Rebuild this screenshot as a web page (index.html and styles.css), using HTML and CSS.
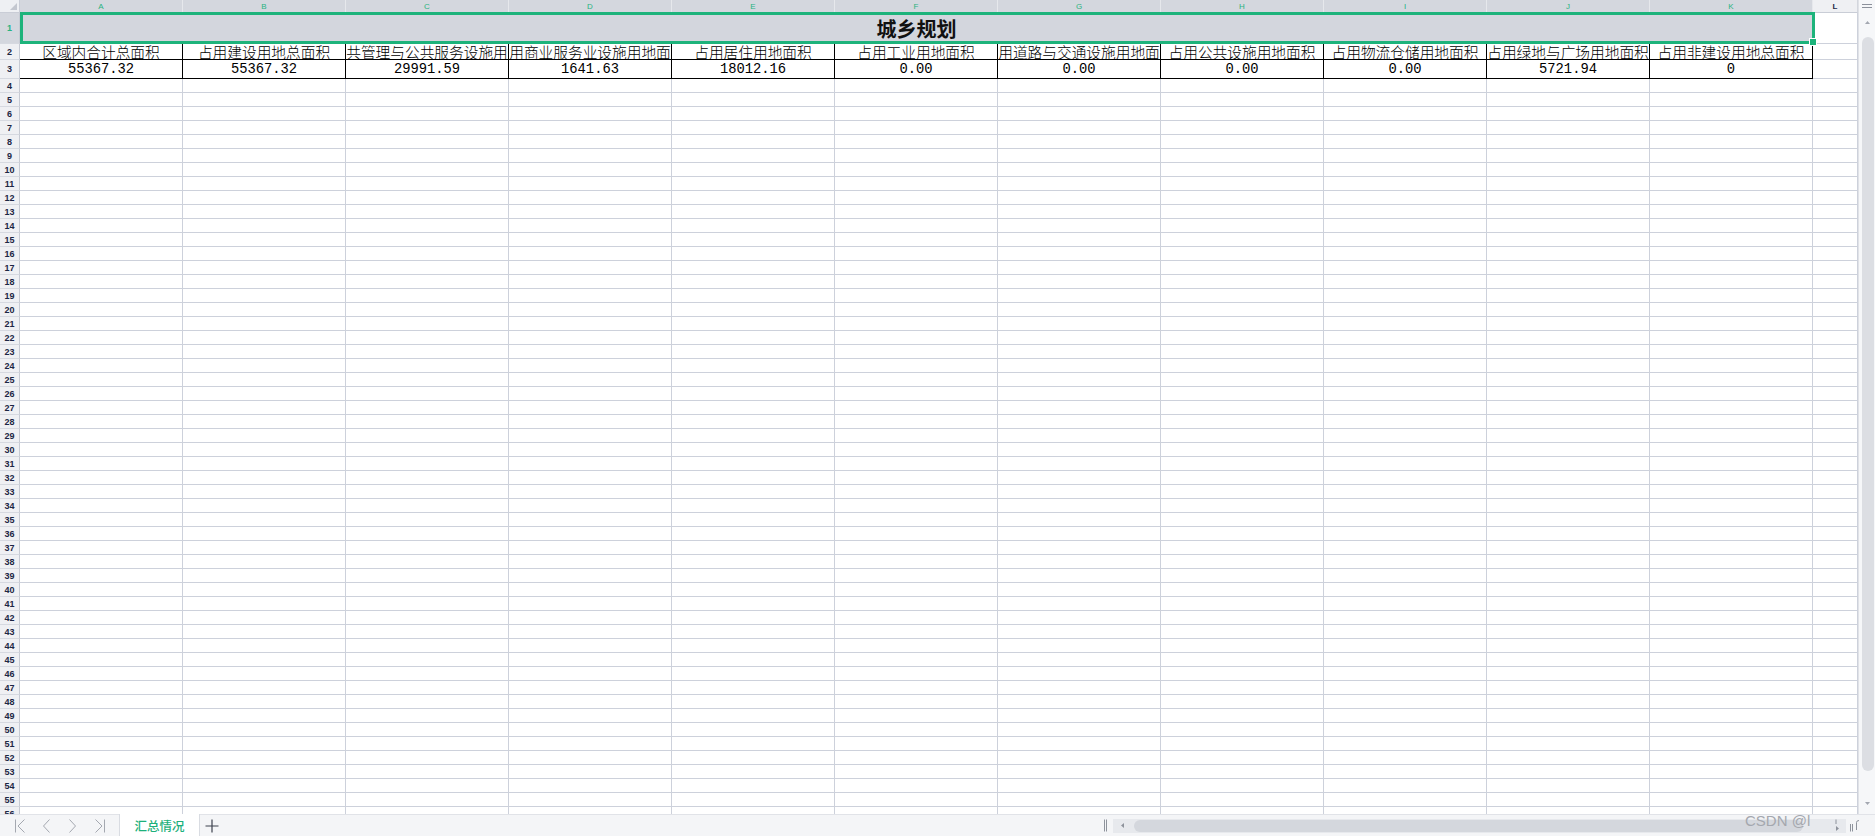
FILE: index.html
```html
<!DOCTYPE html>
<html lang="zh-CN">
<head>
<meta charset="utf-8">
<title>城乡规划</title>
<link rel="stylesheet" href="styles.css">
</head>
<body>
<div class="app">
  <div class="main">
    <div class="sheet" id="sheet">
      <div class="corner"><span class="tri"></span></div>
      <div class="colhd sel">A</div>
      <div class="colhd sel">B</div>
      <div class="colhd sel">C</div>
      <div class="colhd sel">D</div>
      <div class="colhd sel">E</div>
      <div class="colhd sel">F</div>
      <div class="colhd sel">G</div>
      <div class="colhd sel">H</div>
      <div class="colhd sel">I</div>
      <div class="colhd sel">J</div>
      <div class="colhd sel">K</div>
      <div class="colhd">L</div>

      <div class="rowhd sel">1</div>
      <div class="title">城乡规划</div>
      <div class="cell"></div>

      <div class="rowhd">2</div>
      <div class="cell hd"><span>区域内合计总面积</span></div>
      <div class="cell hd"><span>占用建设用地总面积</span></div>
      <div class="cell hd"><span>占用公共管理与公共服务设施用地面积</span></div>
      <div class="cell hd"><span>占用商业服务业设施用地面积</span></div>
      <div class="cell hd"><span>占用居住用地面积</span></div>
      <div class="cell hd"><span>占用工业用地面积</span></div>
      <div class="cell hd"><span>占用道路与交通设施用地面积</span></div>
      <div class="cell hd"><span>占用公共设施用地面积</span></div>
      <div class="cell hd"><span>占用物流仓储用地面积</span></div>
      <div class="cell hd"><span>占用绿地与广场用地面积</span></div>
      <div class="cell hd"><span>占用非建设用地总面积</span></div>
      <div class="cell"></div>

      <div class="rowhd">3</div>
      <div class="cell num">55367.32</div>
      <div class="cell num">55367.32</div>
      <div class="cell num">29991.59</div>
      <div class="cell num">1641.63</div>
      <div class="cell num">18012.16</div>
      <div class="cell num">0.00</div>
      <div class="cell num">0.00</div>
      <div class="cell num">0.00</div>
      <div class="cell num">0.00</div>
      <div class="cell num">5721.94</div>
      <div class="cell num">0</div>
      <div class="cell"></div>

      <div class="selection" id="sel"><span class="handle"></span></div>
    </div>
    <div class="vscroll">
      <svg class="vs-menu" width="12" height="6" viewBox="0 0 12 6"><path d="M1 1.5H11M1 4.5H11" stroke="#8c919b" stroke-width="1"/></svg>
      <svg class="vs-up" width="7" height="5" viewBox="0 0 7 5"><path d="M3.5 1L6 4H1Z" fill="#a3a7b0"/></svg>
      <div class="vs-track"><div class="vs-thumb"></div></div>
      <svg class="vs-down" width="7" height="5" viewBox="0 0 7 5"><path d="M1 1H6L3.5 4Z" fill="#a3a7b0"/></svg>
    </div>
  </div>
  <div class="bottombar">
    <div class="nav">
      <svg width="12" height="14" viewBox="0 0 12 14"><path d="M1.5 0.5V13.5M10.5 0.5L4 7L10.5 13.5" fill="none" stroke="#a4a8b0" stroke-width="1"/></svg>
      <svg width="9" height="14" viewBox="0 0 9 14"><path d="M7.5 0.5L1.5 7L7.5 13.5" fill="none" stroke="#a4a8b0" stroke-width="1"/></svg>
      <svg width="9" height="14" viewBox="0 0 9 14"><path d="M1.5 0.5L7.5 7L1.5 13.5" fill="none" stroke="#a4a8b0" stroke-width="1"/></svg>
      <svg width="12" height="14" viewBox="0 0 12 14"><path d="M1.5 0.5L8 7L1.5 13.5M10.5 0.5V13.5" fill="none" stroke="#a4a8b0" stroke-width="1"/></svg>
    </div>
    <div class="tab">汇总情况</div>
    <svg class="plus" width="14" height="14" viewBox="0 0 14 14"><path d="M7 0.5V13.5M0.5 7H13.5" fill="none" stroke="#3c424e" stroke-width="1.2"/></svg>
    <div class="spacer"></div>
    <div class="hscroll">
      <svg class="hs-grip" width="5" height="13" viewBox="0 0 5 13"><path d="M1.5 0.5V12.5M3.5 0.5V12.5" stroke="#8e939c" stroke-width="1"/></svg>
      <div class="hs-track">
        <svg class="hs-left" width="5" height="7" viewBox="0 0 5 7"><path d="M4 1V6L1 3.5Z" fill="#8e939c"/></svg>
        <div class="hs-thumb"></div>
        <svg class="hs-right" width="6" height="13" viewBox="0 0 6 13"><path d="M2 0.5V5" stroke="#8e939c" stroke-width="1"/><path d="M2 7V12L5 9.5Z" fill="#8e939c"/></svg>
      </div>
      <svg class="hs-end" width="12" height="13" viewBox="0 0 12 13"><path d="M1.5 5V12.5M3.5 5V12.5" stroke="#8e939c" stroke-width="1"/><path d="M7.5 11V3.5Q7.5 1.5 10 1.5" fill="none" stroke="#8e939c" stroke-width="1"/></svg>
    </div>
    <div class="watermark">CSDN @l</div>
  </div>
</div>
<script src="script.js"></script>
</body>
</html>
```

FILE: styles.css
```css
html, body {
  margin: 0;
  padding: 0;
  background: #ffffff;
  overflow: hidden;
}

.app {
  width: 1875px;
  height: 836px;
  display: flex;
  flex-direction: column;
  font-family: "Liberation Sans", "Noto Sans CJK SC", sans-serif;
}

.main {
  height: 814px;
  display: flex;
}

.sheet {
  position: relative;
  width: 1858px;
  height: 814px;
  overflow: hidden;
  display: grid;
  grid-template-columns: 20px repeat(11, 163px) 45px;
  grid-template-rows: 13px 31px 16px 19px;
  grid-auto-rows: 14px;
}

.sheet > div {
  box-sizing: border-box;
}

.corner {
  position: relative;
  background: #eef0f3;
  border-right: 1px solid #c9cdd6;
  border-bottom: 1px solid #c9cdd6;
}

.corner .tri {
  position: absolute;
  right: 2px;
  bottom: 2px;
  width: 0;
  height: 0;
  border-left: 7px solid transparent;
  border-bottom: 7px solid #c3c7cf;
}

.colhd {
  background: #eff0f3;
  border-right: 1px solid #d3d6dd;
  border-bottom: 1px solid #c9cdd6;
  font-size: 8px;
  font-weight: bold;
  line-height: 13px;
  text-align: center;
  color: #1f2a48;
}

.colhd.sel {
  background: #d4d7de;
  border-right: 1px solid #e6e8ec;
  color: #2ab380;
  font-weight: normal;
}

.rowhd {
  background: #eff0f3;
  border-right: 1px solid #c6cad3;
  border-bottom: 1px solid #d6d9e0;
  font-size: 9px;
  font-weight: bold;
  color: #1c2644;
  display: flex;
  align-items: center;
  justify-content: center;
}

.rowhd.sel {
  background: #d4d7de;
  color: #2ab380;
}

.title {
  grid-column: span 11;
  background: #d3d6dd;
  display: flex;
  align-items: center;
  justify-content: center;
  font-family: "Noto Sans CJK SC", sans-serif;
  font-weight: bold;
  font-size: 20px;
  color: #111111;
  letter-spacing: 0px;
}

.cell {
  border-right: 1px solid #cdd1db;
  border-bottom: 1px solid #cdd1db;
}

.cell.hd {
  border-right: 1px solid #000000;
  border-bottom: 1px solid #000000;
  display: flex;
  align-items: center;
  justify-content: center;
  overflow: hidden;
  white-space: nowrap;
  font-family: "Noto Sans CJK SC", sans-serif;
  font-weight: 300;
  font-size: 14.7px;
  line-height: 16px;
  color: #000000;
}

.cell.hd span {
  flex: none;
}

.cell.num {
  border-right: 1px solid #000000;
  border-bottom: 1px solid #000000;
  display: flex;
  align-items: center;
  justify-content: center;
  font-family: "Liberation Mono", monospace;
  font-size: 13.8px;
  color: #000000;
  padding-top: 1px;
}

.selection {
  position: absolute;
  left: 20px;
  top: 12px;
  width: 1795px;
  height: 32px;
  box-sizing: border-box;
  border: 3px solid #1db37b;
  pointer-events: none;
}

.selection .handle {
  position: absolute;
  right: -5px;
  bottom: -5px;
  width: 6px;
  height: 6px;
  background: #1db37b;
  border: 1px solid #ffffff;
}

.vscroll {
  width: 17px;
  box-sizing: border-box;
  border-left: 1px solid #e0e2e7;
  background: #f6f7f9;
  display: flex;
  flex-direction: column;
  align-items: center;
}

.vs-menu {
  margin-top: 3px;
}

.vs-up {
  margin-top: 11px;
}

.vs-track {
  flex: 1;
  width: 100%;
  padding: 12px 1px 30px 3px;
  box-sizing: border-box;
  display: flex;
}

.vs-thumb {
  flex: 1;
  background: #dcdee3;
  border-radius: 6px;
}

.vs-down {
  margin-bottom: 8px;
}

.bottombar {
  position: relative;
  height: 22px;
  box-sizing: border-box;
  background: #f4f5f7;
  border-top: 1px solid #e1e3e8;
  display: flex;
  align-items: stretch;
}

.nav {
  width: 119px;
  box-sizing: border-box;
  padding-left: 14px;
  display: flex;
  align-items: center;
  gap: 0;
}

.nav svg:nth-child(1) { margin-right: 16px; }
.nav svg:nth-child(2) { margin-right: 17px; }
.nav svg:nth-child(3) { margin-right: 17px; }

.tab {
  width: 81px;
  margin-top: -1px;
  box-sizing: border-box;
  background: #ffffff;
  border-left: 1px solid #d9dce2;
  border-right: 1px solid #d9dce2;
  display: flex;
  align-items: center;
  justify-content: center;
  font-family: "Noto Sans CJK SC", sans-serif;
  font-weight: 500;
  font-size: 12.5px;
  color: #1db07b;
  padding-top: 1px;
}

.plus {
  align-self: center;
  margin-left: 5px;
}

.spacer {
  flex: 1;
}

.hscroll {
  width: 772px;
  display: flex;
  align-items: center;
}

.hs-grip {
  margin-right: 5px;
}

.hs-track {
  width: 733px;
  height: 14px;
  background: #e7e9ed;
  display: flex;
  align-items: center;
  box-sizing: border-box;
  padding-left: 7px;
}

.hs-left {
  margin-right: 9px;
}

.hs-thumb {
  width: 669px;
  height: 12px;
  background: #d4d7dd;
  border-radius: 6px;
}

.hs-right {
  margin-left: 31px;
}

.hs-end {
  margin-left: 3px;
}

.watermark {
  position: absolute;
  left: 1745px;
  top: -3px;
  font-family: "Liberation Sans", sans-serif;
  font-size: 15px;
  color: #a4a7ae;
  white-space: nowrap;
  pointer-events: none;
}
```

FILE: script.js
```js
(function () {
  var sheet = document.getElementById('sheet');
  var sel = document.getElementById('sel');
  var frag = document.createDocumentFragment();
  for (var r = 4; r <= 56; r++) {
    var h = document.createElement('div');
    h.className = 'rowhd';
    h.textContent = String(r);
    frag.appendChild(h);
    for (var c = 0; c < 12; c++) {
      var d = document.createElement('div');
      d.className = 'cell';
      frag.appendChild(d);
    }
  }
  sheet.insertBefore(frag, sel);
})();
```
